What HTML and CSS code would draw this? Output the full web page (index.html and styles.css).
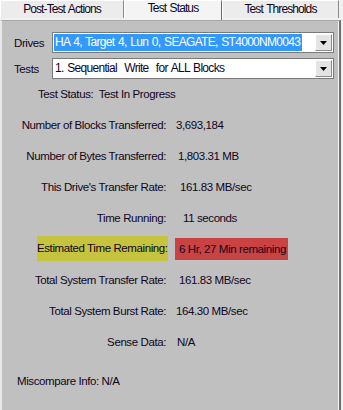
FILE: index.html
```html
<!DOCTYPE html>
<html lang="en">
<head>
  <meta charset="UTF-8">
  <title>Test Status</title>
  <link rel="stylesheet" href="styles.css">
</head>
<body>
  <div class="tabs">
    <div class="tab tab-post">Post-Test Actions</div>
    <div class="tab tab-active">Test Status</div>
    <div class="tab tab-thresh">Test Thresholds</div>
  </div>

  <div class="panel">
    <div class="field">
      <label>Drives</label>
      <div class="combo">
        <span class="combo-text selected">HA 4, Target 4, Lun 0, SEAGATE, ST4000NM0043</span>
        <span class="combo-btn"><svg width="7" height="4" viewBox="0 0 7 4"><path d="M0 0h7L3.5 4z" fill="#000"/></svg></span>
      </div>
    </div>
    <div class="field">
      <label>Tests</label>
      <div class="combo">
        <span class="combo-text">1. Sequential&nbsp; Write&nbsp; for ALL Blocks</span>
        <span class="combo-btn"><svg width="7" height="4" viewBox="0 0 7 4"><path d="M0 0h7L3.5 4z" fill="#000"/></svg></span>
      </div>
    </div>

    <div class="status">Test Status:&nbsp; Test In Progress</div>

    <div class="stats">
      <div class="label">Number of Blocks Transferred:</div>
      <div class="value">3,693,184</div>

      <div class="label">Number of Bytes Transferred:</div>
      <div class="value v2">1,803.31 MB</div>

      <div class="label">This Drive's Transfer Rate:</div>
      <div class="value v4">161.83 MB/sec</div>

      <div class="label">Time Running:</div>
      <div class="value v7">11 seconds</div>

      <div class="label"><span class="warn">Estimated Time Remaining:</span></div>
      <div class="value"><span class="alert">6 Hr, 27 Min remaining</span></div>

      <div class="label">Total System Transfer Rate:</div>
      <div class="value v3">161.83 MB/sec</div>

      <div class="label">Total System Burst Rate:</div>
      <div class="value">164.30 MB/sec</div>

      <div class="label">Sense Data:</div>
      <div class="value v1">N/A</div>
    </div>

    <div class="miscompare">Miscompare Info: N/A</div>
  </div>
</body>
</html>
```

FILE: styles.css
```css
body {
  margin: 0;
  background: #f0f0f0;
  font-family: "Liberation Sans", Arial, sans-serif;
  font-size: 11.5px;
  letter-spacing: -0.4px;
  color: #10061c;
  width: 343px;
  height: 410px;
  overflow: hidden;
  white-space: nowrap;
}

/* tab strip */
.tabs {
  display: flex;
  height: 20px;
  align-items: flex-end;
}
.tab {
  box-sizing: border-box;
  height: 18px;
  line-height: 17px;
  text-align: center;
  font-size: 12px;
  letter-spacing: -0.9px;
  word-spacing: 1px;
  background: #ececec;
  border-top: 1px solid #fff;
  border-left: 1px solid #fff;
  border-right: 1px solid #8a8a8a;
  margin-bottom: 2px;
}
.tab-post {
  width: 124px;
}
.tab-active {
  width: 98px;
  height: 20px;
  line-height: 15px;
  margin-bottom: 0;
  background: #f4f4f4;
  border-right: 1px solid #6a6a6a;
}
.tab-thresh {
  width: 117px;
}

/* main panel */
.panel {
  box-sizing: border-box;
  width: 341px;
  height: 390px;
  background: #c0c0c0;
  border-left: 2px solid #e8e8e8;
  border-top: 1px solid #a8a8a8;
  border-right: 2px solid #6e6e6e;
  box-shadow: inset -1px 0 0 #f4f4f4;
  padding-top: 11px;
}

.field {
  display: flex;
  align-items: center;
  height: 21px;
  margin-bottom: 5px;
}
.field label {
  width: 50px;
  padding-left: 12px;
  box-sizing: border-box;
}
.combo {
  box-sizing: border-box;
  width: 282px;
  height: 21px;
  background: #fff;
  border: 1px solid #7a7a7a;
  display: flex;
  align-items: center;
  justify-content: space-between;
  padding: 1px;
}
.combo-text {
  padding: 1px 2px 1px 1px;
  line-height: 15px;
  font-size: 12px;
  letter-spacing: -0.7px;
  word-spacing: 1px;
}
.combo-text.selected {
  background: #3399ff;
  color: #fff;
}
.combo-btn {
  box-sizing: border-box;
  width: 17px;
  height: 17px;
  background: #e4e4e4;
  border: 1px solid #fff;
  border-right-color: #8a8a8a;
  border-bottom-color: #8a8a8a;
  display: flex;
  align-items: center;
  justify-content: center;
}

.status {
  padding-left: 36px;
  margin-top: 5px;
  height: 20px;
  line-height: 20px;
}

/* stats grid */
.stats {
  display: grid;
  grid-template-columns: 164px 1fr;
  grid-auto-rows: 31px;
  column-gap: 10px;
  margin-top: 5px;
  align-items: center;
}
.label {
  text-align: right;
}
.v1 { padding-left: 1px; }
.v2 { padding-left: 2px; }
.v3 { padding-left: 3px; }
.v4 { padding-left: 4px; }
.v7 { padding-left: 7px; }

.warn {
  display: inline-block;
  width: 131px;
  height: 25px;
  line-height: 25px;
  margin-right: -2px;
  padding-right: 2px;
  box-sizing: border-box;
  background: #c6c33e;
}
.alert {
  display: inline-block;
  height: 22px;
  line-height: 22px;
  padding: 0 2px 0 4px;
  margin-left: -1px;
  background: #c94343;
}

.miscompare {
  padding-left: 15px;
  margin-top: 18px;
}
```
